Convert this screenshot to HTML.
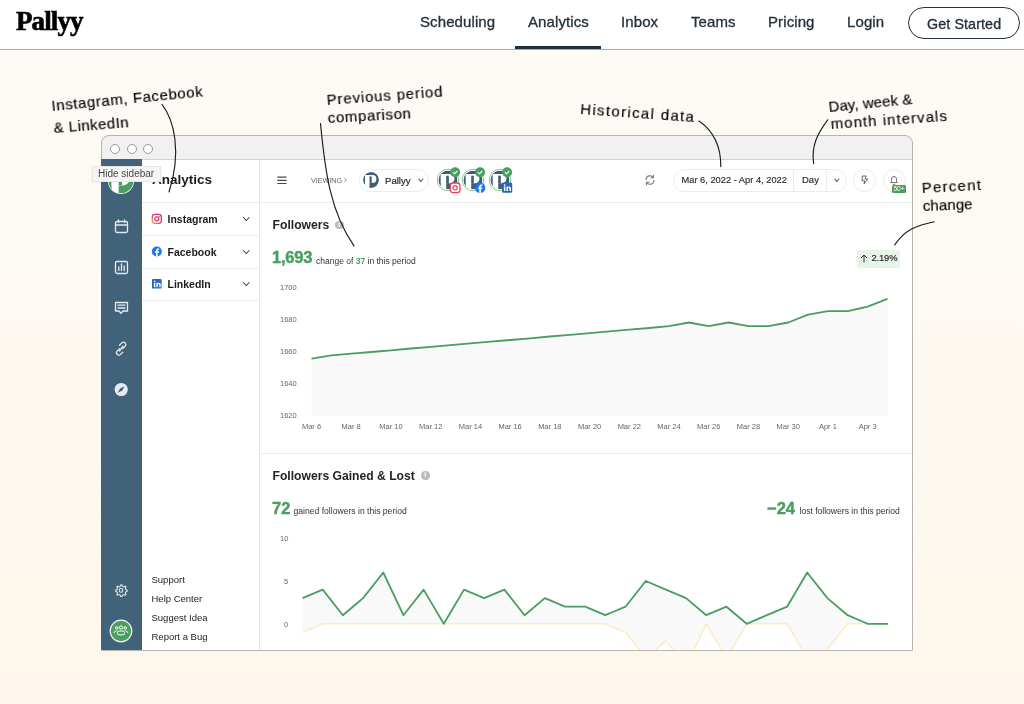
<!DOCTYPE html>
<html><head><meta charset="utf-8">
<style>
*{box-sizing:border-box;margin:0;padding:0}
html,body{width:1024px;height:704px;overflow:hidden}
body>*{will-change:transform}
body{background:linear-gradient(#fdfbf6 50px,#fdf9f1 400px,#fef7ea 704px);font-family:"Liberation Sans",sans-serif;position:relative;color:#222}
.a{position:absolute;white-space:nowrap}
#hdr{position:absolute;left:0;top:0;width:1024px;height:50px;background:#fff;border-bottom:1px solid #a8a8a8}
.nav{position:absolute;top:13px;font-size:15px;color:#22313d;letter-spacing:0.1px;-webkit-text-stroke:0.3px #22313d}
.hand{z-index:3;position:absolute;white-space:nowrap;font-family:"Liberation Sans",sans-serif;font-size:15px;line-height:15px;color:#000;-webkit-text-stroke:0.15px #000;transform-origin:0 12.7px}
#win{position:absolute;left:101px;top:135px;width:812px;height:516px;border-radius:8px 8px 0 0;background:#fff;overflow:hidden}
#tbar{position:absolute;left:101px;top:135px;width:812px;height:25px;background:#f1f1f1;border-bottom:1.5px solid #d2d2d2}
.dot{position:absolute;top:143.6px;width:10px;height:10px;border-radius:50%;border:1px solid #9a9a9a;background:#fff}
#side{z-index:2;position:absolute;left:101px;top:159px;width:41px;height:491px;background:#416279}
#panel{position:absolute;left:141px;top:160px;width:119px;height:491px;background:#fff;border-right:1px solid #e6e6e6}
.row{position:absolute;left:0;width:117px;height:33px;border-bottom:1px solid #ececec}
.rowt{white-space:nowrap;position:absolute;left:167.5px;font-size:10.5px;font-weight:bold;color:#1c1c1c}
.chev{position:absolute;left:243.8px;width:4.6px;height:4.6px;border-right:1.1px solid #333;border-bottom:1.1px solid #333;transform:rotate(45deg)}
.foot{position:absolute;left:151.5px;white-space:nowrap;font-size:9.5px;color:#1c1c1c}
.sico{position:absolute;left:13px}
.yl{position:absolute;white-space:nowrap;font-size:7.5px;color:#666}
.xl{position:absolute;white-space:nowrap;font-size:7.5px;color:#666;transform:translateX(-50%)}
#in{position:absolute;left:-101px;top:-135px;width:1024px;height:704px}
#winb{position:absolute;left:101px;top:135px;width:812px;height:516px;border:1px solid #b4b4b4;border-radius:8px 8px 0 0;pointer-events:none}
.hl{position:absolute;height:1px;background:#ececec}
.chs{position:absolute;width:3.6px;height:3.6px;border-right:0.9px solid #555;border-bottom:0.9px solid #555;transform:rotate(45deg)}
.info{position:absolute;width:8.5px;height:8.5px;border-radius:50%;background:#b9bcc0;color:#fff;font-size:7px;font-weight:bold;line-height:8.5px;text-align:center}
.tip{z-index:3;position:absolute;left:91.5px;top:165.8px;width:69px;height:16.2px;background:#f5f5f5;border:1px solid #e8e8e8;font-size:10px;color:#444;line-height:14px;padding-left:5px;white-space:nowrap;box-shadow:0 0.5px 1.5px rgba(0,0,0,0.08)}
</style></head>
<body>
<svg width="0" height="0" style="position:absolute">
 <defs>
  <clipPath id="pc"><circle cx="0" cy="0" r="8"/></clipPath>
  <symbol id="plogo" viewBox="-8 -8 16 16" overflow="visible">
   <g clip-path="url(#pc)">
    <circle cx="0" cy="0" r="8" fill="currentColor"/>
    <path d="M-6,-5 H1.5 A3.9,3.9 0 0 1 1.5,2.8 H-6 Z" fill="#fff"/>
    <rect x="-6" y="-5" width="4.5" height="14" fill="#fff"/>
    <rect x="-1.5" y="-3.6" width="2.2" height="6.4" fill="currentColor"/>
   </g>
  </symbol>
 </defs>
</svg>
<div id="hdr">
  <div class="a" style="left:16px;top:6px;font-family:'Liberation Serif',serif;font-weight:bold;font-size:27px;letter-spacing:-0.9px;color:#000;-webkit-text-stroke:0.6px #000">Pallyy</div>
  <div class="nav" style="left:420px">Scheduling</div>
  <div class="nav" style="left:528px">Analytics</div>
  <div class="a" style="left:515px;top:46px;width:86px;height:3px;background:#1f3040"></div>
  <div class="nav" style="left:621px">Inbox</div>
  <div class="nav" style="left:691px">Teams</div>
  <div class="nav" style="left:768px">Pricing</div>
  <div class="nav" style="left:847px">Login</div>
  <div class="a" style="left:908px;top:7px;width:112px;height:32px;border:1px solid #22313d;border-radius:16px"></div>
  <div class="nav" style="left:927px;top:16px;font-size:14.3px">Get Started</div>
</div>

<div id="win">
 <div id="in">
  <div id="tbar"></div>
  <div class="dot" style="left:110px"></div>
  <div class="dot" style="left:126.5px"></div>
  <div class="dot" style="left:143px"></div>
  <div id="panel"></div>
  <!-- panel -->
  <div class="a" style="left:152px;top:172px;font-size:13.5px;font-weight:bold;color:#1c1c1c">Analytics</div>
  <div class="hl" style="left:141px;top:202px;width:118px"></div>
  <div class="hl" style="left:141px;top:235px;width:118px"></div>
  <div class="hl" style="left:141px;top:268px;width:118px"></div>
  <div class="hl" style="left:141px;top:300px;width:118px"></div>
  <div class="rowt" style="top:213px">Instagram</div>
  <div class="rowt" style="top:246px">Facebook</div>
  <div class="rowt" style="top:278px">LinkedIn</div>
  <div class="chev" style="top:214.5px"></div>
  <div class="chev" style="top:247.5px"></div>
  <div class="chev" style="top:279.5px"></div>
  <svg class="a" style="left:151px;top:213px" width="12" height="78" viewBox="151 213 12 78">
   <defs><linearGradient id="ig" x1="0" y1="1" x2="1" y2="0"><stop offset="0" stop-color="#f9a03f"/><stop offset="0.5" stop-color="#e1306c"/><stop offset="1" stop-color="#c13584"/></linearGradient></defs>
   <rect x="152.3" y="214.3" width="9" height="9" rx="2.5" fill="none" stroke="url(#ig)" stroke-width="1.3"/>
   <circle cx="156.8" cy="218.8" r="2" fill="none" stroke="#e1306c" stroke-width="1.2"/>
   <circle cx="159.3" cy="216.4" r="0.6" fill="#e1306c"/>
   <circle cx="156.8" cy="251.5" r="5" fill="#1877f2"/>
   <path d="M157.6,256.5 v-3.8 h1.3 l0.2,-1.4 h-1.5 v-0.9 c0,-0.4 0.2,-0.7 0.7,-0.7 h0.8 v-1.3 h-1.2 c-1.3,0 -1.9,0.8 -1.9,2 v0.9 h-1.2 v1.4 h1.2 v3.8 z" fill="#fff"/>
   <rect x="152" y="279" width="9.6" height="9.6" rx="1.2" fill="#2a66b5"/>
   <path d="M153.9,282.8 h1.4 v4.4 h-1.4 z M154.6,280.5 a0.8,0.8 0 1 1 0,1.6 a0.8,0.8 0 1 1 0,-1.6 z M156.4,282.8 h1.3 v0.6 c0.3,-0.5 0.8,-0.7 1.4,-0.7 c1.1,0 1.6,0.7 1.6,1.9 v2.6 h-1.4 v-2.3 c0,-0.6 -0.2,-0.9 -0.7,-0.9 c-0.5,0 -0.8,0.3 -0.8,0.9 v2.3 h-1.4 z" fill="#fff"/>
  </svg>
  <div class="foot" style="top:574px">Support</div>
  <div class="foot" style="top:593px">Help Center</div>
  <div class="foot" style="top:612px">Suggest Idea</div>
  <div class="foot" style="top:631px">Report a Bug</div>

  <!-- main header -->
  <div class="hl" style="left:260px;top:202px;width:652px"></div>
  <svg class="a" style="left:276px;top:175px" width="12" height="10" viewBox="276 175 12 10"><g stroke="#4a4a4a" stroke-width="1.2"><line x1="277.3" y1="177.1" x2="286.6" y2="177.1"/><line x1="277.3" y1="180.3" x2="286.6" y2="180.3"/><line x1="277.3" y1="183.5" x2="286.6" y2="183.5"/></g></svg>
  <div class="a" style="left:311px;top:176px;font-size:7.2px;color:#666">VIEWING</div>
  <svg class="a" style="left:343px;top:177px" width="5" height="6" viewBox="0 0 5 6"><path d="M1.3,1.2 L3.3,3 L1.3,4.8" fill="none" stroke="#888" stroke-width="0.9"/></svg>
  <div class="a" style="left:359px;top:169px;width:70px;height:23px;border:1px solid #ececec;border-radius:12px"></div>
  <svg class="a" style="left:363px;top:172px" width="16" height="16" viewBox="0 0 16 16"><use href="#plogo" x="0" y="0" width="16" height="16" style="color:#3f5d76"/></svg>
  <div class="a" style="left:385px;top:174.5px;font-size:9.6px;color:#2b2b2b;-webkit-text-stroke:0.2px #2b2b2b">Pallyy</div>
  <div class="chs" style="left:418.5px;top:177px"></div>
  <!-- accounts -->
  <svg class="a" style="left:434.6px;top:166px" width="26" height="28" viewBox="-13 -14 26 28">
   <circle cx="0" cy="0" r="10.8" fill="#fff" stroke="#6dba80" stroke-width="0.8"/>
   <use href="#plogo" x="-9.6" y="-9.6" width="19.2" height="19.2" style="color:#3f5d76"/>
   <circle cx="7.1" cy="-7.7" r="5" fill="#4a9e5f"/>
   <path d="M4.9,-7.8 L6.5,-6.2 L9.3,-9" fill="none" stroke="#fff" stroke-width="1.1"/>
   <rect x="2.3" y="3" width="9.6" height="9.6" rx="2.6" fill="#fff" stroke="#e8405a" stroke-width="1.3"/>
   <circle cx="7.1" cy="7.8" r="2.2" fill="none" stroke="#e8405a" stroke-width="1.2"/>
  </svg>
  <svg class="a" style="left:460.3px;top:166px" width="26" height="28" viewBox="-13 -14 26 28">
   <circle cx="0" cy="0" r="10.8" fill="#fff" stroke="#6dba80" stroke-width="0.8"/>
   <use href="#plogo" x="-9.6" y="-9.6" width="19.2" height="19.2" style="color:#3f5d76"/>
   <circle cx="7.1" cy="-7.7" r="5" fill="#4a9e5f"/>
   <path d="M4.9,-7.8 L6.5,-6.2 L9.3,-9" fill="none" stroke="#fff" stroke-width="1.1"/>
   <circle cx="7.1" cy="7.7" r="5.2" fill="#1877f2"/>
   <path d="M7.9,12.9 v-4 h1.3 l0.2,-1.4 h-1.5 v-0.9 c0,-0.4 0.2,-0.7 0.7,-0.7 h0.8 v-1.3 h-1.2 c-1.3,0 -1.9,0.8 -1.9,2 v0.9 h-1.2 v1.4 h1.2 v4 z" fill="#fff"/>
  </svg>
  <svg class="a" style="left:486.9px;top:166px" width="26" height="28" viewBox="-13 -14 26 28">
   <circle cx="0" cy="0" r="10.8" fill="#fff" stroke="#6dba80" stroke-width="0.8"/>
   <use href="#plogo" x="-9.6" y="-9.6" width="19.2" height="19.2" style="color:#3f5d76"/>
   <circle cx="7.1" cy="-7.7" r="5" fill="#4a9e5f"/>
   <path d="M4.9,-7.8 L6.5,-6.2 L9.3,-9" fill="none" stroke="#fff" stroke-width="1.1"/>
   <rect x="2" y="2.6" width="10.2" height="10.2" rx="1.5" fill="#2a66b5"/>
   <path d="M3.9,6.5 h1.5 v4.6 h-1.5 z M4.65,4.2 a0.85,0.85 0 1 1 0,1.7 a0.85,0.85 0 1 1 0,-1.7 z M6.5,6.5 h1.4 v0.6 c0.3,-0.5 0.8,-0.7 1.4,-0.7 c1.1,0 1.7,0.7 1.7,2 v2.7 h-1.5 v-2.4 c0,-0.6 -0.2,-0.9 -0.7,-0.9 c-0.5,0 -0.8,0.3 -0.8,0.9 v2.4 h-1.5 z" fill="#fff"/>
  </svg>

  <svg class="a" style="left:644px;top:174px" width="12" height="12" viewBox="0 0 12 12">
   <g fill="none" stroke="#777" stroke-width="1.1" stroke-linecap="round">
    <path d="M2,5.5 A4,4 0 0 1 9.3,3.5"/><path d="M9.5,1.3 L9.5,3.8 L7,3.8"/>
    <path d="M10,6.5 A4,4 0 0 1 2.7,8.5"/><path d="M2.5,10.7 L2.5,8.2 L5,8.2"/>
   </g>
  </svg>
  <div class="a" style="left:673px;top:169px;width:174px;height:23px;border:1px solid #ececec;border-radius:12px"></div>
  <div class="a" style="left:793px;top:169px;width:1px;height:23px;background:#ececec"></div>
  <div class="a" style="left:826px;top:169px;width:1px;height:23px;background:#ececec"></div>
  <div class="a" style="left:681.5px;top:175px;font-size:9.3px;color:#2b2b2b;-webkit-text-stroke:0.15px #2b2b2b">Mar 6, 2022 - Apr 4, 2022</div>
  <div class="a" style="left:802px;top:174px;font-size:9.5px;color:#2b2b2b;-webkit-text-stroke:0.15px #2b2b2b">Day</div>
  <div class="chs" style="left:834.5px;top:177px"></div>
  <div class="a" style="left:853px;top:168.5px;width:23px;height:23px;border:1px solid #ececec;border-radius:50%"></div>
  <div class="a" style="left:882.5px;top:168.5px;width:23px;height:23px;border:1px solid #ececec;border-radius:50%"></div>
  <svg class="a" style="left:858px;top:174px" width="12" height="12" viewBox="0 0 12 12">
   <path d="M4.2,2 L8.2,2 L7,5 L9.8,5 L6,10 L6.8,6.8 L4.2,6.8 Z" fill="none" stroke="#555" stroke-width="0.9" stroke-linejoin="round"/>
  </svg>
  <svg class="a" style="left:888px;top:173.5px" width="12" height="12" viewBox="0 0 12 12">
   <path d="M2.5,8.5 L3.5,7.3 L3.5,5 A2.5,2.5 0 0 1 8.5,5 L8.5,7.3 L9.5,8.5 Z M5,9.8 A1,1 0 0 0 7,9.8" fill="none" stroke="#666" stroke-width="0.9" stroke-linejoin="round"/>
  </svg>
  <div class="a" style="left:892px;top:185px;width:14px;height:8.3px;background:#4a9e5f;border-radius:1.5px;color:#fff;font-size:6.6px;line-height:8.3px;text-align:center">50+</div>

  <!-- followers -->
  <div class="a" style="left:272.5px;top:218px;font-size:12.2px;font-weight:bold;color:#252525">Followers</div>
  <div class="info" style="left:335px;top:220.5px">i</div>
  <div class="a" style="left:272px;top:248px;font-size:16.5px;font-weight:bold;color:#4a9e5f;letter-spacing:-0.2px;-webkit-text-stroke:0.45px #4a9e5f">1,693</div>
  <div class="a" style="left:316px;top:256px;font-size:8.5px;color:#333">change of <span style="color:#4a9e5f;font-weight:bold">37</span> in this period</div>
  <div class="a" style="left:857px;top:249.5px;width:43px;height:18px;background:#e7f4e8;border-radius:2px"></div>
  <svg class="a" style="left:859px;top:253px" width="10" height="11" viewBox="0 0 10 11"><path d="M5,2 V9.5 M2,5 L5,2 L8,5" fill="none" stroke="#333" stroke-width="1"/></svg>
  <div class="a" style="left:871.5px;top:252px;font-size:9.4px;letter-spacing:-0.15px;color:#2b2b2b;-webkit-text-stroke:0.2px #2b2b2b">2.19%</div>

  <div class="yl" style="left:280px;top:283px">1700</div>
  <div class="yl" style="left:280px;top:315px">1680</div>
  <div class="yl" style="left:280px;top:347px">1660</div>
  <div class="yl" style="left:280px;top:379px">1640</div>
  <div class="yl" style="left:280px;top:411px">1620</div>
  <div class="xl" style="left:311.5px;top:422px">Mar 6</div>
  <div class="xl" style="left:351.2px;top:422px">Mar 8</div>
  <div class="xl" style="left:390.9px;top:422px">Mar 10</div>
  <div class="xl" style="left:430.7px;top:422px">Mar 12</div>
  <div class="xl" style="left:470.4px;top:422px">Mar 14</div>
  <div class="xl" style="left:510.1px;top:422px">Mar 16</div>
  <div class="xl" style="left:549.8px;top:422px">Mar 18</div>
  <div class="xl" style="left:589.6px;top:422px">Mar 20</div>
  <div class="xl" style="left:629.3px;top:422px">Mar 22</div>
  <div class="xl" style="left:669.0px;top:422px">Mar 24</div>
  <div class="xl" style="left:708.7px;top:422px">Mar 26</div>
  <div class="xl" style="left:748.5px;top:422px">Mar 28</div>
  <div class="xl" style="left:788.2px;top:422px">Mar 30</div>
  <div class="xl" style="left:827.9px;top:422px">Apr 1</div>
  <div class="xl" style="left:867.6px;top:422px">Apr 3</div>
  <div class="hl" style="left:260px;top:453px;width:652px"></div>

  <div class="a" style="left:272.5px;top:468.5px;font-size:12.15px;font-weight:bold;color:#252525">Followers Gained &amp; Lost</div>
  <div class="info" style="left:421px;top:471px">i</div>
  <div class="a" style="left:272px;top:499px;font-size:16.5px;font-weight:bold;color:#4a9e5f;-webkit-text-stroke:0.45px #4a9e5f">72</div>
  <div class="a" style="left:293.5px;top:506px;font-size:8.6px;color:#333">gained followers in this period</div>
  <div class="a" style="left:767px;top:499px;font-size:16.5px;font-weight:bold;color:#4a9e5f;-webkit-text-stroke:0.45px #4a9e5f">&#8722;24</div>
  <div class="a" style="left:799.5px;top:506px;font-size:8.55px;color:#333">lost followers in this period</div>
  <div class="yl" style="left:280px;top:534px">10</div>
  <div class="yl" style="left:284px;top:577px">5</div>
  <div class="yl" style="left:284px;top:620px">0</div>

  <svg class="a" style="left:0;top:0" width="1024" height="704" viewBox="0 0 1024 704">
   <path d="M311.5,416 L311.5,358.7 L331.4,355.4 L351.2,353.7 L371.1,352.0 L390.9,350.3 L410.8,348.5 L430.7,346.8 L450.5,345.1 L470.4,343.4 L490.3,341.7 L510.1,340.0 L530.0,338.3 L549.8,336.5 L569.7,334.8 L589.6,333.1 L609.4,331.4 L629.3,329.7 L649.2,328.0 L669.0,326.2 L688.9,322.5 L708.7,326.2 L728.6,322.5 L748.5,326.2 L768.3,326.2 L788.2,322.5 L808.1,314.7 L827.9,311.2 L847.8,311.2 L867.6,306.6 L887.5,298.8 L887.5,416 Z" fill="#f9f9f9"/>
   <polyline points="311.5,358.7 331.4,355.4 351.2,353.7 371.1,352.0 390.9,350.3 410.8,348.5 430.7,346.8 450.5,345.1 470.4,343.4 490.3,341.7 510.1,340.0 530.0,338.3 549.8,336.5 569.7,334.8 589.6,333.1 609.4,331.4 629.3,329.7 649.2,328.0 669.0,326.2 688.9,322.5 708.7,326.2 728.6,322.5 748.5,326.2 768.3,326.2 788.2,322.5 808.1,314.7 827.9,311.2 847.8,311.2 867.6,306.6 887.5,298.8" fill="none" stroke="#4a9e5f" stroke-width="1.8" stroke-linejoin="round"/>
   <path d="M302.5,598.1 L322.7,589.6 L342.9,615.2 L363.1,598.1 L383.3,572.5 L403.4,615.2 L423.6,589.6 L443.8,623.8 L464.0,589.6 L484.2,598.1 L504.4,589.6 L524.6,615.2 L544.8,598.1 L565.0,606.7 L585.2,606.7 L605.3,615.2 L625.5,606.7 L645.7,581.0 L665.9,589.6 L686.1,598.1 L706.3,615.2 L726.5,606.7 L746.7,623.8 L766.9,615.2 L787.1,606.7 L807.2,572.5 L827.4,598.1 L847.6,615.2 L867.8,623.8 L888.0,623.8 L888.0,623.8 L867.8,623.8 L847.6,623.8 L827.4,649.4 L807.2,658.0 L787.1,623.8 L766.9,623.8 L746.7,623.8 L726.5,658.0 L706.3,623.8 L686.1,666.5 L665.9,640.9 L645.7,658.0 L625.5,632.3 L605.3,623.8 L585.2,623.8 L565.0,623.8 L544.8,623.8 L524.6,623.8 L504.4,623.8 L484.2,623.8 L464.0,623.8 L443.8,623.8 L423.6,623.8 L403.4,623.8 L383.3,623.8 L363.1,623.8 L342.9,623.8 L322.7,623.8 L302.5,632.3 Z" fill="#f9f9f9"/>
   <polyline points="302.5,632.3 322.7,623.8 342.9,623.8 363.1,623.8 383.3,623.8 403.4,623.8 423.6,623.8 443.8,623.8 464.0,623.8 484.2,623.8 504.4,623.8 524.6,623.8 544.8,623.8 565.0,623.8 585.2,623.8 605.3,623.8 625.5,632.3 645.7,658.0 665.9,640.9 686.1,666.5 706.3,623.8 726.5,658.0 746.7,623.8 766.9,623.8 787.1,623.8 807.2,658.0 827.4,649.4 847.6,623.8 867.8,623.8 888.0,623.8" fill="none" stroke="#fcebc6" stroke-width="1.5" stroke-linejoin="round"/>
   <polyline points="302.5,598.1 322.7,589.6 342.9,615.2 363.1,598.1 383.3,572.5 403.4,615.2 423.6,589.6 443.8,623.8 464.0,589.6 484.2,598.1 504.4,589.6 524.6,615.2 544.8,598.1 565.0,606.7 585.2,606.7 605.3,615.2 625.5,606.7 645.7,581.0 665.9,589.6 686.1,598.1 706.3,615.2 726.5,606.7 746.7,623.8 766.9,615.2 787.1,606.7 807.2,572.5 827.4,598.1 847.6,615.2 867.8,623.8 888.0,623.8" fill="none" stroke="#4a9e5f" stroke-width="1.8" stroke-linejoin="round"/>
  </svg>
 </div>
</div>
<div id="winb"></div>
  <div id="side"></div>
  <!-- sidebar icons -->
  <svg class="a" style="left:101px;top:159px;z-index:2" width="40" height="492" viewBox="101 159 40 492">
   <circle cx="121" cy="181" r="13" fill="#fff"/>
   <use href="#plogo" x="108.5" y="168.5" width="25" height="25" style="color:#4a9e5f"/>
   <g fill="none" stroke="#e6ebf0" stroke-width="1.3" stroke-linecap="round" stroke-linejoin="round">
    <rect x="115.5" y="221.5" width="12" height="11" rx="1.5"/>
    <line x1="115.5" y1="225" x2="127.5" y2="225"/>
    <line x1="118.5" y1="220" x2="118.5" y2="222.5"/><line x1="124.5" y1="220" x2="124.5" y2="222.5"/>
    <rect x="115.5" y="261.5" width="12" height="12" rx="1.5"/>
    <line x1="118.8" y1="270.5" x2="118.8" y2="267"/><line x1="121.5" y1="270.5" x2="121.5" y2="264"/><line x1="124.2" y1="270.5" x2="124.2" y2="266"/>
    <path d="M115.5,302.5 h12 v8.5 h-4.5 l-2,2.2 l-2,-2.2 h-3.5 z"/>
    <line x1="118" y1="305.2" x2="125" y2="305.2"/><line x1="118" y1="308" x2="125" y2="308"/>
    <path d="M119.5,348.8 l-2.3,2.3 a2.3,2.3 0 0 0 3.3,3.3 l2.3,-2.3"/>
    <path d="M122.8,348.5 l2.3,-2.3 a2.3,2.3 0 0 0 -3.3,-3.3 l-2.3,2.3"/>
    <line x1="119.5" y1="351" x2="123" y2="346.2"/>
   </g>
   <circle cx="121.2" cy="389.5" r="6.6" fill="#e6ebf0"/>
   <path d="M124.5,386.2 L122.3,390.6 L117.9,392.8 L120.1,388.4 Z" fill="#425f78"/>
   <g fill="none" stroke="#e6ebf0" stroke-width="1.25" transform="translate(121,590.4) scale(0.84) translate(-121,-590.6)">
    <path d="M121,584 l1.3,0.2 l0.6,1.6 l1.5,0.6 l1.5,-0.9 l1.1,1.1 l-0.9,1.5 l0.6,1.5 l1.6,0.6 l0,1.6 l-1.6,0.6 l-0.6,1.5 l0.9,1.5 l-1.1,1.1 l-1.5,-0.9 l-1.5,0.6 l-0.6,1.6 l-1.6,0 l-0.6,-1.6 l-1.5,-0.6 l-1.5,0.9 l-1.1,-1.1 l0.9,-1.5 l-0.6,-1.5 l-1.6,-0.6 l0,-1.6 l1.6,-0.6 l0.6,-1.5 l-0.9,-1.5 l1.1,-1.1 l1.5,0.9 l1.5,-0.6 l0.6,-1.6 z"/>
    <circle cx="121" cy="590.6" r="2.2"/>
   </g>
   <circle cx="121" cy="631" r="10.8" fill="#4a9e5f" stroke="#f4f4f4" stroke-width="1.2"/>
   <g fill="none" stroke="#fff" stroke-width="1">
    <circle cx="121" cy="627.5" r="1.6"/><circle cx="116.8" cy="628" r="1.3"/><circle cx="125.2" cy="628" r="1.3"/>
    <rect x="117.5" y="631" width="7" height="3.8" rx="1.5"/>
    <path d="M114,633 q0.5,-2 2.5,-2.2 M128,633 q-0.5,-2 -2.5,-2.2"/>
   </g>
  </svg>
<div class="tip">Hide sidebar</div>
<div class="hand" style="left:51.7px;top:98.3px;letter-spacing:0.6px;transform:rotate(-5.51deg)">Instagram, Facebook</div>
<div class="hand" style="left:53.6px;top:120.0px;letter-spacing:0.47px;transform:rotate(-4.44deg)">&amp; LinkedIn</div>
<div class="hand" style="left:326.6px;top:92.3px;letter-spacing:0.85px;transform:rotate(-4.19deg)">Previous period</div>
<div class="hand" style="left:328.4px;top:110.3px;letter-spacing:0.63px;transform:rotate(-3.22deg)">comparison</div>
<div class="hand" style="left:580.2px;top:100.7px;letter-spacing:1.35px;transform:rotate(4.03deg)">Historical data</div>
<div class="hand" style="left:828.5px;top:99.1px;letter-spacing:0.1px;transform:rotate(-5.44deg)">Day, week &amp;</div>
<div class="hand" style="left:830.8px;top:116.2px;letter-spacing:1.05px;transform:rotate(-4.02deg)">month intervals</div>
<div class="hand" style="left:921.7px;top:180.3px;letter-spacing:1.25px;transform:rotate(-2.96deg)">Percent</div>
<div class="hand" style="left:922.9px;top:198.0px;letter-spacing:0.1px;transform:rotate(-2.16deg)">change</div>
<svg class="a" style="left:0;top:0;pointer-events:none;z-index:4" width="1024" height="704" viewBox="0 0 1024 704">
 <g fill="none" stroke="#1e1e1e" stroke-width="1.15" stroke-linecap="round">
  <path d="M162,104.4 C174,120 182,152 169,192"/>
  <path d="M320.5,123.6 C325,170 330,212 354,245.8"/>
  <path d="M699,121 C712,130 721,145 720.8,166.6"/>
  <path d="M827.7,119.8 C818,133 811,145 813.6,163.6"/>
  <path d="M934.3,221.8 C915,226 905,230 894.7,244.8"/>
 </g>
</svg>
</body></html>
